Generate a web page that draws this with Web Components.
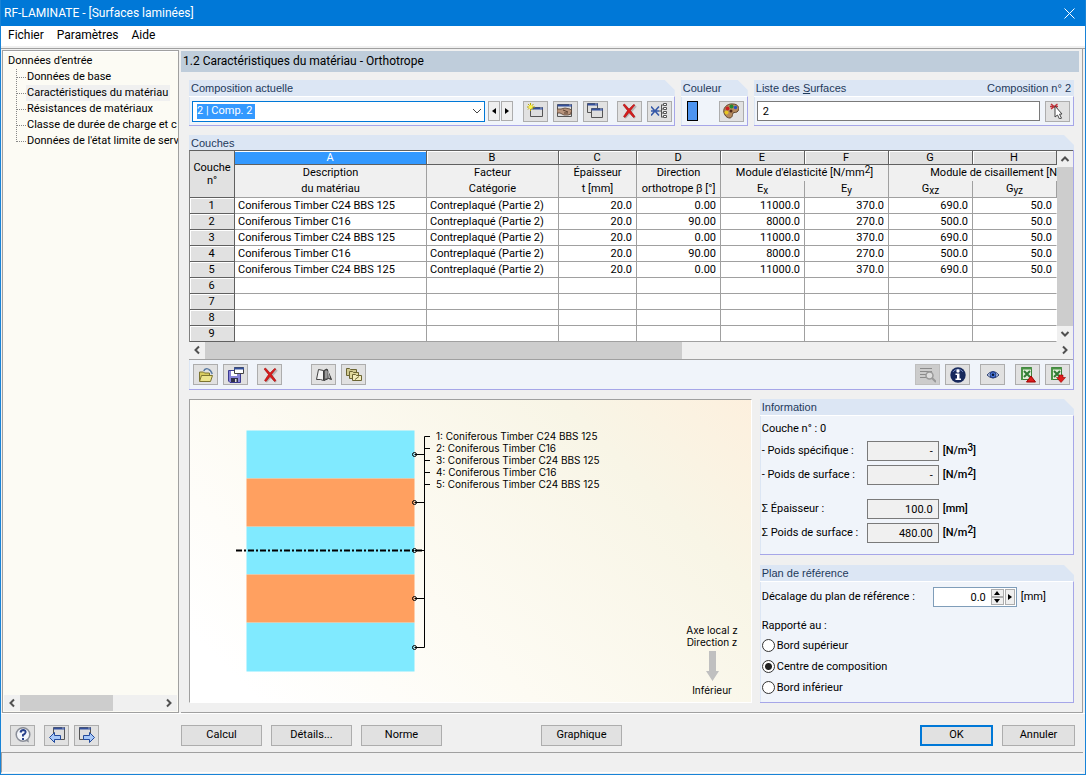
<!DOCTYPE html>
<html lang="fr">
<head>
<meta charset="utf-8">
<title>RF-LAMINATE</title>
<style>
  body { margin: 0; font: 11px/16px Roboto, "Liberation Sans", sans-serif; color: #000; background: #f0f0f0; }
</style>
</head>
<body>
<laminate-app></laminate-app>

<script>
const base = `*, *::before, *::after { box-sizing: border-box; }
  button, input, select { font: inherit; color: inherit; margin: 0; border-radius: 0; }`;

function define(name, html, setup) {
  const template = document.createElement('template');
  template.innerHTML = html.replace('<style>', '<style>' + base);
  customElements.define(name, class extends HTMLElement {
    constructor() {
      super();
      this.attachShadow({ mode: 'open' }).append(template.content.cloneNode(true));
    }
    connectedCallback() { if (setup) setup(this.shadowRoot, this); }
  });
}

const windowShape = (x, y, w, h) => `<path d="M${x} ${y}h${w}v${h}h-${w}z" fill="#dedede" stroke="#555"/><path d="M${x} ${y + 1}h${w + .5}" stroke="#34509c" stroke-width="2"/><path d="M${x + w - 2} ${y + .5}h1" stroke="#fff"/>`;
const excel = `<path d="M1.500.500h10v12h-10z" fill="#e2efda" stroke="#3d7d3a"/><path d="M1 1.500h11M2 1v12" stroke="#4a9446" stroke-width="2"/><path d="M4 4l6 6M10 4l-6 6" stroke="#2f7c33" stroke-width="2"/>`;
const ICONS = {
  create: windowShape(3.5, 4.5, 12, 9) + `<path d="M3.500 0v8M0 4h8M1 1l5.500 5.500M6.500 1L1 6.500" stroke="#b8a800"/><circle cx="3.700" cy="4" r="2" fill="#fff34a"/>`,
  edit: windowShape(.5, 1.5, 14, 12) + `<path d="M0 6h4l4-1 5 1 2 2-1 1v2l-3 1H7l-4-2H0z" fill="#b8947c" stroke="#584030" stroke-width=".8"/><path d="M6 7l5 2M7 10h4" stroke="#584030"/>`,
  copy: windowShape(.5, .5, 10, 9) + windowShape(4.5, 5.5, 11, 9),
  remove: `<path d="M4 3l10 12M15 3L4 15" stroke="#777" stroke-width="2" opacity=".4"/><path d="M2 2l1.500-1L8 6l4.500-4.500L14 2 9.500 7.500 14 13.500l-1.500 1L8 9.500 4 14.500l-1.500-1L6.500 7.500z" fill="#d81c1c" stroke="#900" stroke-width=".5"/>`,
  assign: `<path d="M0 3.500l8 9M8 3.500l-8 9M0 8h8" stroke="#3558a8" stroke-width="1.500"/><path d="M8 8h2M10.500 2v12M10 2h2M10 6h2M10 10h2M10 14h2" stroke="#555"/><path d="M12.500.500h3v2h-3zM12.500 4.500h3v2h-3zM12.500 8.500h3v2h-3zM12.500 12.500h3v2h-3z" fill="#fff" stroke="#555"/>`,
  palette: `<path d="M2 12C-2 6 4 0 10 1c5 0 7 4 5 7-1 2-4 1-5 2-1 2 0 4-3 5-2 0-4-1-5-3z" fill="#b58a5c" stroke="#60452b"/><circle cx="3.500" cy="9.500" r="2" fill="#e8c820"/><circle cx="4.500" cy="5.500" r="2" fill="#c22"/><circle cx="8.500" cy="3.500" r="2" fill="#248a30"/><circle cx="12.500" cy="4.500" r="1.700" fill="#2452c8"/><circle cx="8" cy="8" r="1.500" fill="#502818"/>`,
  pick: `<path d="M1 1l6 5M7.500 1L1 6M0 3.500h8" stroke="#c03038" stroke-width="1.500"/><path d="M5 3l7 8-2.500.200 2 4-2 .8-2-4L5 14z" fill="#fff" stroke="#444"/>`,
  open: `<path d="M1.500 14V5h4l1 1h5v2" fill="#d8cc60" stroke="#7c7430"/><path d="M1.500 14.500l2-6h11l-2 6z" fill="#ece48c" stroke="#7c7430"/><path d="M6 4c1-3 6-3 8 3" stroke="#5878a0" stroke-width="2"/><path d="M7 4c1-2 4-2 6 3" stroke="#fff" stroke-width=".7"/>`,
  save: `<path d="M.500 3.500h12v12H2l-1.500-1.500z" fill="#8884d8" stroke="#3b3a90"/><path d="M3 4h6v5H3z" fill="#fff"/><path d="M3 11h7v4H3z" fill="#303048"/><path d="M7 12h1.500v3H7z" fill="#ddd"/><path d="M6.500.500h9v6h-9z" fill="#fff" stroke="#444"/><path d="M6 1.500h10" stroke="#34509c" stroke-width="2"/>`,
  library: `<path d="M.500 12.500l2-10 5 1v10l-3-1z" fill="#f4f4f4" stroke="#444"/><path d="M8 3.500l3-1.500 4.500 10.500-3-1L8 13.500z" fill="#777" stroke="#333"/><path d="M10 4v7M12 4l1.500 7" stroke="#bbb"/>`,
  folders: `<path d="M.500 1.500h3l1 1h6v6H.500z" fill="#cfc88e" stroke="#6b6432"/><path d="M3.500 4.500h3l1 1h5v6h-9z" fill="#dfd79a" stroke="#6b6432"/><path d="M6.500 7.500h3l1 1h5v5h-9z" fill="#f3edbd" stroke="#6b6432"/><path d="M9 12.500l4-3" stroke="#6b6432"/>`,
  find: `<path d="M0 1.500h12M0 4.500h12M0 7.500h6M0 10.500h6" stroke="#8b8b8b"/><circle cx="9.500" cy="8.500" r="3.500" fill="#ddd" stroke="#999" stroke-width="1.500"/><path d="M12 11l4 4" stroke="#999" stroke-width="2"/>`,
  info: `<circle cx="8" cy="8" r="7.700" fill="#17295c"/><path d="M3 5a6 6 0 0 1 10 0" stroke="#6d83bd"/><circle cx="8" cy="4" r="1.700" fill="#fff"/><path d="M5.500 6.500H9.500v5H11v1.500H5.500v-1.500H7V8H5.500z" fill="#fff"/>`,
  eye: `<path d="M2 8q6-7 12 0q-6 6-12 0z" fill="#c9d6ee" stroke="#2c3f72"/><circle cx="8" cy="7.800" r="3" fill="#4a78dc" stroke="#203a80"/><circle cx="8" cy="7.800" r="1.300" fill="#081430"/>`,
  excelUp: excel + `<path d="M11 9l4.500 6h-9z" fill="#e01c1c" stroke="#900"/>`,
  excelDown: excel + `<path d="M11 15.500l4.500-5H13V8H9v2.500H6.500z" fill="#e01c1c" stroke="#900" stroke-width=".6"/>`,
  help: `<circle cx="8" cy="7.500" r="6.800" fill="#f4f6fb" stroke="#8a8e98" stroke-width="1.500"/><path d="M10 13.500l4 2-1-4z" fill="#8a8e98"/><path d="M5.500 5.500q.500-2.500 3-2.500 2.500.300 2 2.500-.500 1.500-2.500 2.500V9.500" stroke="#27408b" stroke-width="2"/><path d="M7 11h2v2H7z" fill="#27408b"/>`,
  previous: windowShape(4.5, .5, 11, 12) + `<path d="M.500 10.500L5.500 5.500v3h6v4h-6v3z" fill="#a8c8f8" stroke="#234a9c"/>`,
  next: windowShape(.5, .5, 11, 12) + `<path d="M15.500 10.500l-5-5v3h-6v4h6v3z" fill="#a8c8f8" stroke="#234a9c"/>`
};

define('icon-button', `<style>
  :host { display: block; flex: none; }
  button { display: grid; place-items: center; width: 25px; height: 21px; padding: 0; border: 1px solid #adadad; background: #e1e1e1; }
  button:disabled { background: #ccc; border-color: #bfbfbf; }
  svg { display: block; width: 16px; height: 16px; fill: none; }
</style><button type="button"></button>`, (root, host) => {
  const b = root.querySelector('button');
  b.setAttribute('aria-label', host.getAttribute('label'));
  b.disabled = host.hasAttribute('off');
  b.innerHTML = `<svg viewBox="0 0 16 16" aria-hidden="true">${ICONS[host.getAttribute('icon')]}</svg>`;
});

define('arrow-button', `<style>
  :host { display: block; flex: none; width: 12px; height: 20px; }
  button { display: grid; place-items: center; width: 100%; height: 100%; padding: 0; border: 1px solid #adadad; background: #efefef; }
  svg { display: block; width: 6px; height: 6px; }
  :host([dir-to=left]) svg { transform: rotate(180deg); }
  :host([dir-to=up]) svg { transform: rotate(-90deg); }
  :host([dir-to=down]) svg { transform: rotate(90deg); }
</style><button type="button"><svg viewBox="0 0 6 6"><path d="M1 0l4 3-4 3z"/></svg></button>`, (root, host) => {
  root.querySelector('button').setAttribute('aria-label', host.getAttribute('label'));
});

define('push-button', `<style>
  :host { display: block; flex: none; width: 81px; }
  button { display: block; width: 100%; height: 21px; padding: 0; border: 1px solid #adadad; background: #e1e1e1; line-height: 16px; }
  :host([narrow]) { width: 73px; }
  :host([default]) button { border: 2px solid #0078d7; }
</style><button type="button"><slot></slot></button>`);

define('scroll-bar', `<style>
  :host { display: flex; height: 16px; background: #f0f0f0; }
  :host([vertical]) { flex-direction: column; width: 16px; height: auto; }
  svg { flex: none; width: 16px; height: 16px; fill: none; stroke: #505050; stroke-width: 2; }
  .track { flex: 1; display: flex; flex-direction: inherit; min-width: 0; }
  .thumb { flex: 0 0 var(--thumb, 100%); background: #cdcdcd; }
  .v { display: none; }
  :host([vertical]) .h { display: none; }
  :host([vertical]) .v { display: block; }
</style>
<svg class="h" viewBox="0 0 16 16"><path d="M10 4.500L6.500 8l3.500 3.500"/></svg>
<svg class="v" viewBox="0 0 16 16"><path d="M4.500 10L8 6.500l3.500 3.500"/></svg>
<div class="track"><div class="thumb"></div></div>
<svg class="h" viewBox="0 0 16 16"><path d="M6 4.500L9.500 8 6 11.500"/></svg>
<svg class="v" viewBox="0 0 16 16"><path d="M4.500 6L8 9.500 11.500 6"/></svg>`);

define('group-box', `<style>
  :host { display: flex; flex-direction: column; }
  header { flex: none; display: flex; justify-content: space-between; height: 16px; padding: 0 3px 0 2px; background: #dce6f4;
    font-family: "Liberation Sans", sans-serif; color: #1e395b; clip-path: polygon(0 0, calc(100% - 10px) 0, 100% 10px, 100% 100%, 0 100%); }
  .body { flex: 1; border: 1px solid #a6a6e8; border-width: 0 1px 1px 0; border-top: 1px solid #fff; background: #f0f4fa; box-shadow: inset 1px 0 #dce6f4; }
  :host([full]) header { clip-path: none; }
  :host([flush]) header { height: 15px; }
  :host([flush]) .body { border-top: 0; }
</style>
<header><slot name="title"></slot><slot name="note"></slot></header>
<div class="body"><slot></slot></div>`);

define('nav-tree', `<style>
  :host { display: flex; flex-direction: column; border: 1px solid #a0a0a0; box-shadow: inset 0 1px #fff; background: #fcfbf4; overflow: hidden; }
  nav { flex: 1; padding: 2px 0 0 5px; overflow: hidden; white-space: nowrap; }
  a { color: inherit; text-decoration: none; display: inline-block; height: 16px; padding: 0 2px 0 1px; }
  ul { list-style: none; margin: 0 0 0 8px; padding: 0; background: linear-gradient(#888 50%, transparent 50%) 0 0 / 1px 2px repeat-y; }
  nav > a { padding-left: 0; }
  li { display: flex; height: 16px; }
  li::before { content: ""; flex: none; width: 10px; height: 9px; border-bottom: 1px dotted #888; }
  li:last-child { background: linear-gradient(#fcfbf4, #fcfbf4) 0 9px / 1px 7px no-repeat; }
  .on { background: #f0f0f0; }
  scroll-bar { --thumb: 66%; margin: 0 1px 1px; }
</style>
<nav><a href="#entree">Données d'entrée</a>
<ul>
  <li><a href="#base">Données de base</a></li>
  <li><a class="on" href="#materiau" aria-current="page">Caractéristiques du matériau</a></li>
  <li><a href="#resistances">Résistances de matériaux</a></li>
  <li><a href="#classe">Classe de durée de charge et c</a></li>
  <li><a href="#els">Données de l'état limite de serv</a></li>
</ul></nav>
<scroll-bar></scroll-bar>`);

define('layer-table', `<style>
  :host { display: grid; grid-template-columns: minmax(0, 1fr) 16px; border-left: 1px solid #808080; border-top: 1px solid #606060; background: #fff; }
  .view { overflow: hidden; }
  table { width: 867px; table-layout: fixed; border-collapse: separate; border-spacing: 0; }
  th, td { height: 16px; padding: 0 4px 0 3px; font-weight: 400; line-height: 15px; border-right: 1px solid #a0a0a0; border-bottom: 1px solid #a0a0a0; white-space: nowrap; overflow: hidden; }
  .letters th { height: 14px; line-height: 12px; background: #e1e1e1; border-color: #606060; box-shadow: inset 1px 1px #fff; }
  .letters .on { background: #3399ff; color: #fff; box-shadow: inset 0 1px #fff; }
  .names th { background: #f0f0f0; border-bottom: 0; padding: 0; line-height: 16px; }
  .names .shear { text-align: right; border-right: 0; }
  .names.last th { height: 17px; border-bottom: 1px solid #a0a0a0; }
  .corner.corner { background: #e1e1e1; line-height: 13px; border: solid #606060; border-width: 0 1px 1px 0; padding: 0; box-shadow: none; }
  tbody th { background: #e1e1e1; border-color: #606060; box-shadow: inset 1px 1px #fff; }
  td:last-child { border-right-color: #fff; }
  .num { text-align: right; }
  sub, sup { font-size: 10px; line-height: 0; }
  sup { vertical-align: 3px; }
  sub { vertical-align: -2px; }
</style>
<div class="view"><table>
  <colgroup><col style="width:45px"><col style="width:192px"><col style="width:132px"><col style="width:78px"><col span="5" style="width:84px"></colgroup>
  <thead>
    <tr class="letters"><th class="corner" rowspan="3">Couche<br>n°</th><th class="on">A</th><th>B</th><th>C</th><th>D</th><th>E</th><th>F</th><th>G</th><th>H</th></tr>
    <tr class="names"><th>Description</th><th>Facteur</th><th>Épaisseur</th><th>Direction</th><th colspan="2">Module d'élasticité [N/mm<sup>2</sup>]</th><th class="shear" colspan="2">Module de cisaillement [N</th></tr>
    <tr class="names last"><th>du matériau</th><th>Catégorie</th><th>t [mm]</th><th>orthotrope β [°]</th><th>E<sub>x</sub></th><th>E<sub>y</sub></th><th>G<sub>xz</sub></th><th>G<sub>yz</sub></th></tr>
  </thead>
  <tbody></tbody>
</table></div>
<scroll-bar vertical></scroll-bar>`, root => {
  const a = ['Coniferous Timber C24 BBS 125', 'Contreplaqué (Partie 2)', '20.0', '0.00', '11000.0', '370.0', '690.0', '50.0'];
  const b = ['Coniferous Timber C16', 'Contreplaqué (Partie 2)', '20.0', '90.00', '8000.0', '270.0', '500.0', '50.0'];
  const rows = [a, b, a, b, a];
  let html = '';
  for (let i = 0; i < 9; i++) {
    const cells = rows[i] || Array(8).fill('');
    html += `<tr><th scope="row">${i + 1}</th>` + cells.map((c, k) => `<td${k > 1 ? ' class="num"' : ''}>${c}</td>`).join('') + '</tr>';
  }
  root.querySelector('tbody').innerHTML = html;
});

define('layer-diagram', `<style>
  :host { display: flex; border: 1px solid #fff; border-top-color: #a0a0a0; border-left-color: #a0a0a0;
    background: linear-gradient(45deg, #fff 8%, #fdfbf3 40%, #f8f5e6 78%, #fdf0de 100%);
    font: 10px/12px Inter, "Liberation Sans", sans-serif; }
  svg { display: block; flex: none; }
  ol { list-style: none; margin: 30px 0 0 4px; padding: 0; white-space: nowrap; }
  .axis { margin-left: auto; align-self: flex-end; padding: 0 13px 6px 0; text-align: center; }
  .axis p { margin: 0; }
  .axis svg { margin: 3px auto; }
</style>
<svg width="242" height="302" viewBox="190 400 242 302" fill="none" aria-hidden="true">
  <path fill="#80eaff" d="M246.500 430.500h168v48h-168zM246.500 526.500h168v48h-168zM246.500 622.500h168v49h-168z"/>
  <path fill="#ffa060" d="M246.500 478.500h168v48h-168zM246.500 574.500h168v48h-168z"/>
  <path stroke="#000" stroke-width="2" stroke-dasharray="6 2 2 2" d="M236 550.500h188"/>
  <path stroke="#000" d="M414.500 454.500h10M414.500 502.500h10M414.500 550.500h10M414.500 598.500h10M414.500 647.500h10M430 436.500h-5.500v211M424.500 448.500h5.500M424.500 460.500h5.500M424.500 472.500h5.500M424.500 484.500h5.500"/>
  <g stroke="#000"><circle cx="414.500" cy="454.500" r="2"/><circle cx="414.500" cy="502.500" r="2"/><circle cx="414.500" cy="550.500" r="2"/><circle cx="414.500" cy="598.500" r="2"/><circle cx="414.500" cy="647.500" r="2"/></g>
</svg>
<ol><li>1: Coniferous Timber C24 BBS 125</li><li>2: Coniferous Timber C16</li><li>3: Coniferous Timber C24 BBS 125</li><li>4: Coniferous Timber C16</li><li>5: Coniferous Timber C24 BBS 125</li></ol>
<div class="axis"><p>Axe local z</p><p>Direction z</p>
  <svg width="13" height="30" viewBox="0 0 13 30" aria-hidden="true"><path fill="#c0c0c0" d="M3 0h7v20h3l-6.500 10L0 20h3z"/></svg>
  <p>Inférieur</p></div>`);

define('laminate-app', `<style>
  :host { display: flex; flex-direction: column; box-sizing: border-box; min-height: 100vh; border: 1px solid #1883d7; border-top: 0; background: #f0f0f0; white-space: nowrap; }
  .titlebar { flex: none; display: flex; justify-content: space-between; align-items: center; height: 26px; padding: 0 10px 0 3px; background: #0078d7; color: #fff; font-size: 12px; }
  .titlebar button { display: block; padding: 0; border: 0; background: none; }
  .titlebar svg { display: block; }
  .menu { flex: none; display: flex; align-items: flex-start; gap: 13px; height: 20px; padding: 1px 7px 0; background: #fff; font-size: 12px; }
  .menu button { padding: 0; border: 0; background: none; line-height: 16px; }
  .work { flex: 1; display: flex; gap: 2px; margin-top: 2px; padding-left: 1px; border-top: 1px solid #a0a0a0; }
  nav-tree { flex: none; width: 177px; margin-top: 1px; }
  main { flex: 1; min-width: 0; display: flex; flex-direction: column; margin-right: 2px; border: solid #a0a0a0; border-width: 0 1px 1px 0; }
  h1 { flex: none; margin: 2px 3px 8px 0; height: 21px; padding: 0 2px; background: #bfcddb; font-size: 12px; font-weight: 400; line-height: 21px; }
  .content { flex: 1; display: flex; flex-direction: column; gap: 9px; padding: 0 8px 9px; }
  .row { display: flex; gap: 6px; }
  .bar { display: flex; align-items: center; height: 28px; padding: 0 3px; }
  .tools { height: 29px; padding-left: 4px; }
  .current { flex: 487; } .colour { flex: 0 0 67px; } .list { flex: 321; }
  .current .bar { padding-right: 2px; }
  .combo { position: relative; flex: 1; display: flex; margin-right: 3px; }
  select { appearance: none; flex: 1; width: 100%; height: 21px; padding: 0 4px; border: 1px solid #0078d7; color: #fff;
    background: linear-gradient(#3399ff, #3399ff) 4px 2px / 58px 15px no-repeat #fff; }
  select option { color: #000; }
  .combo svg { position: absolute; right: 3px; top: 6px; pointer-events: none; }
  .combo + arrow-button { margin-right: 1px; }
  .gap-s { margin-left: 5px; } .gap-m { margin-left: 9px; } .gap-l { margin-left: 10px; } .gap-xl { margin-left: 29px; } .push { margin-left: auto; }
  .swatch { width: 11px; height: 20px; border: 1px solid #000; background: #4d94f0; margin-left: 3px; }
  .list input { flex: 1; min-width: 0; height: 20px; padding: 0 5px; border: 1px solid #7a7a7a; background: #fff; }
  .hscroll { --thumb: 56%; border: solid #a0a0a0; border-width: 0 0 1px; height: 18px; }
  .lower { flex: 1; display: flex; gap: 8px; }
  layer-diagram { flex: 562; }
  .side { flex: 315; display: flex; flex-direction: column; gap: 10px; }
  .info { display: grid; grid-template-columns: 105px 72px 1fr; row-gap: 4px; align-items: center; padding: 5px 0 11px 2px; }
  .info p { grid-column: 1 / -1; margin: 0; height: 16px; }
  .info input { width: 72px; height: 20px; padding: 0 5px; border: 1px solid #7a7a7a; background: #f0f0f0; text-align: right; }
  .info span { padding-left: 4px; font-weight: 500; }
  .info .sum { margin-top: 10px; }
  sup { font-size: 10px; line-height: 0; vertical-align: 3px; }
  .plan { flex: 1; }
  .offset { display: flex; align-items: center; height: 20px; margin: 5px 0 10px; padding-left: 2px; }
  .offset label { width: 171px; }
  .spin { display: flex; align-items: center; width: 84px; height: 20px; border: 1px solid #7f9db9; background: #fff; }
  .spin input { flex: 1; min-width: 0; height: 18px; padding: 0 5px 0 0; border: 0; background: none; text-align: right; }
  .spin arrow-button { width: 10px; height: 16px; margin-right: 1px; }
  .updown { display: flex; flex-direction: column; }
  .updown arrow-button { width: 13px; height: 8px; }
  .offset span { padding-left: 4px; }
  .radios { margin: 0; padding: 0 0 0 2px; border: 0; }
  .radios legend { padding: 0; height: 18px; line-height: 18px; }
  .radios label { display: flex; align-items: center; gap: 2px; height: 21px; }
  .radios input { appearance: none; width: 13px; height: 13px; border: 1px solid #333; border-radius: 50%; background: #fff; }
  .radios input:checked { background: radial-gradient(circle, #222 0 3px, #fff 4px); }
  footer { flex: none; display: flex; align-items: center; gap: 9px; height: 38px; margin-top: 1px; padding: 4px 10px 0 9px; box-shadow: 0 -1px #fff; }
  .nav { display: flex; gap: 5px; }
  .calc { margin-left: 73px; }
  .graph { margin-left: 90px; }
  .status { flex: none; height: 21px; margin: 0 2px 1px 0; border: solid #a0a0a0; border-width: 1px 0 0 1px; border-bottom: 1px solid #fff; }
</style>
<div class="titlebar"><span>RF-LAMINATE - [Surfaces laminées]</span><button type="button" aria-label="Fermer"><svg width="11" height="11" viewBox="0 0 11 11" fill="none" stroke="#fff"><path d="M.5.5l10 10M10.500.5l-10 10"/></svg></button></div>
<div class="menu"><button type="button">Fichier</button><button type="button">Paramètres</button><button type="button">Aide</button></div>
<div class="work">
  <nav-tree></nav-tree>
  <main>
    <h1>1.2 Caractéristiques du matériau - Orthotrope</h1>
    <div class="content">
      <div class="row">
        <group-box class="current"><label slot="title" for="comp">Composition actuelle</label>
          <div class="bar"><div class="combo"><select id="comp"><option>2 | Comp. 2</option></select><svg width="10" height="9" viewBox="0 0 10 9" fill="none" stroke="#444"><path d="M1 2l4 4 4-4"/></svg></div>
            <arrow-button dir-to="left" label="Précédent"></arrow-button><arrow-button label="Suivant"></arrow-button>
            <icon-button class="gap-l" icon="create" label="Nouvelle composition"></icon-button>
            <icon-button class="gap-s" icon="edit" label="Renommer"></icon-button>
            <icon-button class="gap-s" icon="copy" label="Copier"></icon-button>
            <icon-button class="gap-m" icon="remove" label="Supprimer"></icon-button>
            <icon-button class="gap-s" icon="assign" label="Supprimer les compositions non utilisées"></icon-button></div>
        </group-box>
        <group-box class="colour"><span slot="title">Couleur</span>
          <div class="bar"><div class="swatch"></div><icon-button class="push" icon="palette" label="Couleur"></icon-button></div>
        </group-box>
        <group-box class="list" full><label slot="title" for="surf">Liste des <u>S</u>urfaces</label><span slot="note">Composition n° 2</span>
          <div class="bar"><input id="surf" value="2"><icon-button class="gap-s" icon="pick" label="Sélectionner"></icon-button></div>
        </group-box>
      </div>
      <group-box flush><span slot="title">Couches</span>
        <layer-table></layer-table>
        <scroll-bar class="hscroll"></scroll-bar>
        <div class="bar tools">
          <icon-button icon="open" label="Ouvrir"></icon-button>
          <icon-button class="gap-s" icon="save" label="Enregistrer"></icon-button>
          <icon-button class="gap-m" icon="remove" label="Supprimer"></icon-button>
          <icon-button class="gap-xl" icon="library" label="Bibliothèque"></icon-button>
          <icon-button class="gap-s" icon="folders" label="Compositions"></icon-button>
          <icon-button class="push" icon="find" off label="Détails"></icon-button>
          <icon-button class="gap-s" icon="info" label="Information"></icon-button>
          <icon-button class="gap-l" icon="eye" label="Vue"></icon-button>
          <icon-button class="gap-l" icon="excelUp" label="Exporter vers Excel"></icon-button>
          <icon-button class="gap-s" icon="excelDown" label="Importer depuis Excel"></icon-button>
        </div>
      </group-box>
      <div class="lower">
        <layer-diagram></layer-diagram>
        <div class="side">
          <group-box><span slot="title">Information</span>
            <div class="info"><p>Couche n° : 0</p>
              <label for="ps">- Poids spécifique :</label><input id="ps" readonly value="-"><span>[N/m<sup>3</sup>]</span>
              <label for="pf">- Poids de surface :</label><input id="pf" readonly value="-"><span>[N/m<sup>2</sup>]</span>
              <label class="sum" for="se">Σ Épaisseur :</label><input class="sum" id="se" readonly value="100.0"><span class="sum">[mm]</span>
              <label for="sp">Σ Poids de surface :</label><input id="sp" readonly value="480.00"><span>[N/m<sup>2</sup>]</span>
            </div>
          </group-box>
          <group-box class="plan"><span slot="title">Plan de référence</span>
            <div class="offset"><label for="dec">Décalage du plan de référence :</label>
              <div class="spin"><input id="dec" value="0.0"><div class="updown"><arrow-button dir-to="up" label="Augmenter"></arrow-button><arrow-button dir-to="down" label="Diminuer"></arrow-button></div><arrow-button label="Options"></arrow-button></div><span>[mm]</span></div>
            <fieldset class="radios"><legend>Rapporté au :</legend>
              <label><input type="radio" name="ref">Bord supérieur</label>
              <label><input type="radio" name="ref" checked>Centre de composition</label>
              <label><input type="radio" name="ref">Bord inférieur</label>
            </fieldset>
          </group-box>
        </div>
      </div>
    </div>
  </main>
</div>
<footer>
  <icon-button icon="help" label="Aide"></icon-button>
  <div class="nav"><icon-button icon="previous" label="Page précédente"></icon-button><icon-button icon="next" label="Page suivante"></icon-button></div>
  <push-button class="calc">Calcul</push-button><push-button>Détails...</push-button><push-button>Norme</push-button>
  <push-button class="graph">Graphique</push-button>
  <push-button class="push" narrow default>OK</push-button><push-button narrow>Annuler</push-button>
</footer>
<div class="status"></div>`);
</script>
</body>
</html>
